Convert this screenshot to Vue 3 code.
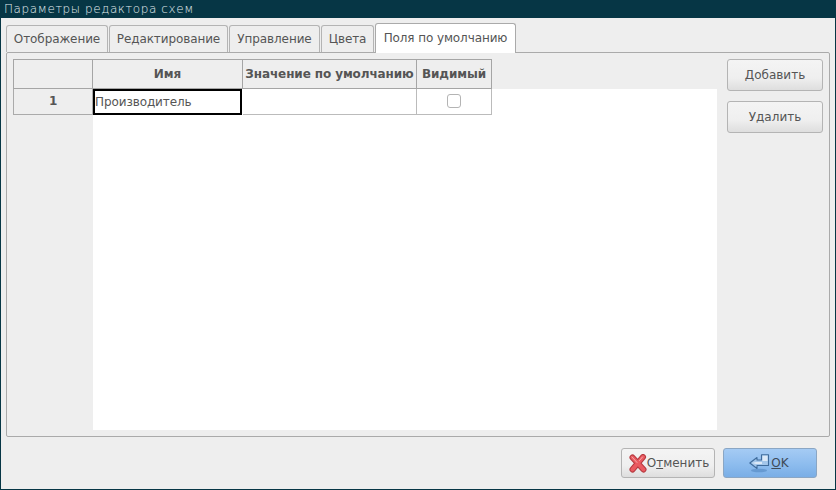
<script setup>
const tabs = [
  { label: 'Отображение', w: 102 },
  { label: 'Редактирование', w: 119 },
  { label: 'Управление', w: 91 },
  { label: 'Цвета', w: 53 },
  { label: 'Поля по умолчанию', w: 141, active: true },
]
</script>

<template>
  <div class="window">
    <div class="titlebar">Параметры редактора схем</div>
    <div class="body">
      <div class="tabs">
        <div
          v-for="t in tabs"
          :key="t.label"
          class="tab"
          :class="{ active: t.active }"
          :style="{ width: t.w + 'px' }"
        >{{ t.label }}</div>
      </div>
      <div class="panel">
        <div class="grid">
          <div class="headrow">
            <div class="hc c0"></div>
            <div class="hc c1">Имя</div>
            <div class="hc c2">Значение по умолчанию</div>
            <div class="hc c3">Видимый</div>
          </div>
          <div class="row">
            <div class="rowhead c0">1</div>
            <div class="cell selected c1">Производитель</div>
            <div class="cell c2"></div>
            <div class="cell c3 center"><span class="check"></span></div>
          </div>
        </div>
        <div class="side">
          <button class="btn side-btn">Добавить</button>
          <button class="btn side-btn">Удалить</button>
        </div>
      </div>
      <div class="footer">
        <button class="btn foot-btn cancel">
          <svg width="18" height="19" viewBox="0 0 18 19" class="ico">
            <path d="M3.5 3.5 L14.5 15.5 M14 3 L3.5 15.5" stroke="#b53a40" stroke-width="6" stroke-linecap="round" fill="none"/>
            <path d="M3.5 3.5 L14.5 15.5 M14 3 L3.5 15.5" stroke="#ea5a60" stroke-width="4" stroke-linecap="round" fill="none"/>
            <path d="M3 3 L8 8.5 M13.5 3 L10.5 6.5" stroke="#f6a9ab" stroke-width="1" stroke-linecap="round" fill="none"/>
          </svg>
          <span>О<u>т</u>менить</span>
        </button>
        <button class="btn foot-btn ok">
          <svg width="21" height="19" viewBox="0 0 21 19" class="ico">
            <ellipse cx="10" cy="16.5" rx="8" ry="1.8" fill="#4f83bd" opacity=".55"/>
            <path d="M0.8 9 L8 3.5 V6 H12.5 V0.8 H19.5 V11.5 H8 V14.5 Z" fill="#a3c6ea" stroke="#3f6c9c" stroke-width="1.1" stroke-linejoin="round"/>
            <path d="M13.5 1.8 H18.5 V7 H13.5 Z M3 9 L7 8 H13 V10 H7 Z" fill="#dce9f7"/>
          </svg>
          <span><u>O</u>K</span>
        </button>
      </div>
    </div>
  </div>
</template>

<style>
html, body { margin: 0; padding: 0; background: #063645; }
</style>

<style scoped>
.window {
  width: 836px;
  height: 490px;
  display: flex;
  flex-direction: column;
  background: #063645;
  font-family: "DejaVu Sans", sans-serif;
  font-size: 12px;
  color: #555;
  overflow: hidden;
}
.titlebar {
  height: 18px;
  line-height: 18px;
  padding-left: 4px;
  color: #e0ebee;
  font-size: 12px;
  font-weight: 200;
  letter-spacing: 0.6px;
  flex: none;
  white-space: nowrap;
}
.body {
  flex: 1;
  margin: 0 1px 1px;
  background: #eeeeee;
  display: flex;
  flex-direction: column;
  padding: 5px 5px 0;
  min-height: 0;
}
.tabs {
  display: flex;
  align-items: flex-end;
  height: 29px;
  flex: none;
  position: relative;
  z-index: 1;
  letter-spacing: -0.1px;
}
.tab {
  box-sizing: border-box;
  height: 27px;
  margin-right: 1px;
  border: 1px solid #b4b4b4;
  border-bottom: none;
  border-radius: 3px 3px 0 0;
  text-align: center;
  line-height: 27px;
  background: #eeeeee;
  white-space: nowrap;
  flex: none;
}
.tab.active {
  height: 30px;
  line-height: 28px;
  margin-bottom: -1px;
  background: #fff;
  border-color: #aaa;
}
.panel {
  box-sizing: border-box;
  width: 824px;
  height: 385px;
  border: 1px solid #aaaaaa;
  border-radius: 2px;
  padding: 6px;
  display: flex;
  flex: none;
}
.grid {
  width: 704px;
  display: flex;
  flex-direction: column;
  flex: none;
  background: linear-gradient(to right, transparent 80px, #fff 80px) 0 30px no-repeat;
  letter-spacing: -0.1px;
}
.headrow, .row { display: flex; flex: none; }
.headrow { height: 30px; }
.row { height: 26px; background: #fff; width: 479px; }
.c0 { width: 80px; }
.c1 { width: 150px; }
.c2 { width: 174px; }
.c3 { width: 75px; }
.hc, .rowhead, .cell {
  box-sizing: border-box;
  flex: none;
}
.hc {
  background: #eeeeee;
  border-top: 1px solid #a5a5a5;
  border-right: 1px solid #a5a5a5;
  border-bottom: 1px solid #a5a5a5;
  font-weight: 700;
  text-align: center;
  line-height: 28px;
  white-space: nowrap;
}
.headrow .c0 { border-left: 1px solid #a5a5a5; }
.rowhead {
  background: #eeeeee;
  border-left: 1px solid #aaa;
  border-right: 1px solid #aaa;
  border-bottom: 1px solid #aaa;
  font-weight: 700;
  text-align: center;
  line-height: 25px;
}
.cell {
  border-right: 1px solid #bbb;
  border-bottom: 1px solid #bbb;
  line-height: 25px;
  color: #555;
  white-space: nowrap;
}
.cell.selected {
  border: 2px solid #000;
  line-height: 22px;
  padding-left: 0;
  width: 149px;
  margin-right: 1px;
}
.center { display: flex; align-items: center; justify-content: center; }
.check {
  display: block;
  box-sizing: border-box;
  width: 14px;
  height: 14px;
  border: 1px solid #b4b4b4;
  border-radius: 3px;
  background: #fff;
  margin-bottom: 2px;
}
.side {
  margin-left: 10px;
  width: 96px;
  display: flex;
  flex-direction: column;
  gap: 10px;
  flex: none;
}
.btn {
  box-sizing: border-box;
  border: 1px solid #b4b4b4;
  border-radius: 3px;
  background: linear-gradient(to bottom, #f4f4f4 0%, #efefef 60%, #dedede 100%);
  font-family: "DejaVu Sans", sans-serif;
  font-size: 12px;
  color: #555;
  padding: 0;
  display: flex;
  align-items: center;
  justify-content: center;
}
.side-btn { height: 32px; width: 96px; }
.footer {
  display: flex;
  justify-content: flex-end;
  gap: 8px;
  padding: 11px 13px 0 0;
  width: 824px;
  box-sizing: border-box;
}
.foot-btn { width: 94px; height: 30px; gap: 1px; }
.cancel { padding-left: 2px; gap: 0; }
.ok {
  background: linear-gradient(to bottom, #a5cbf4 0%, #8dbcee 55%, #7aaee6 100%);
  border-color: #8aa6c4;
  color: #3f4a57;
  padding-right: 2px;
}
.ico { flex: none; }
u { text-decoration: underline; }
</style>
